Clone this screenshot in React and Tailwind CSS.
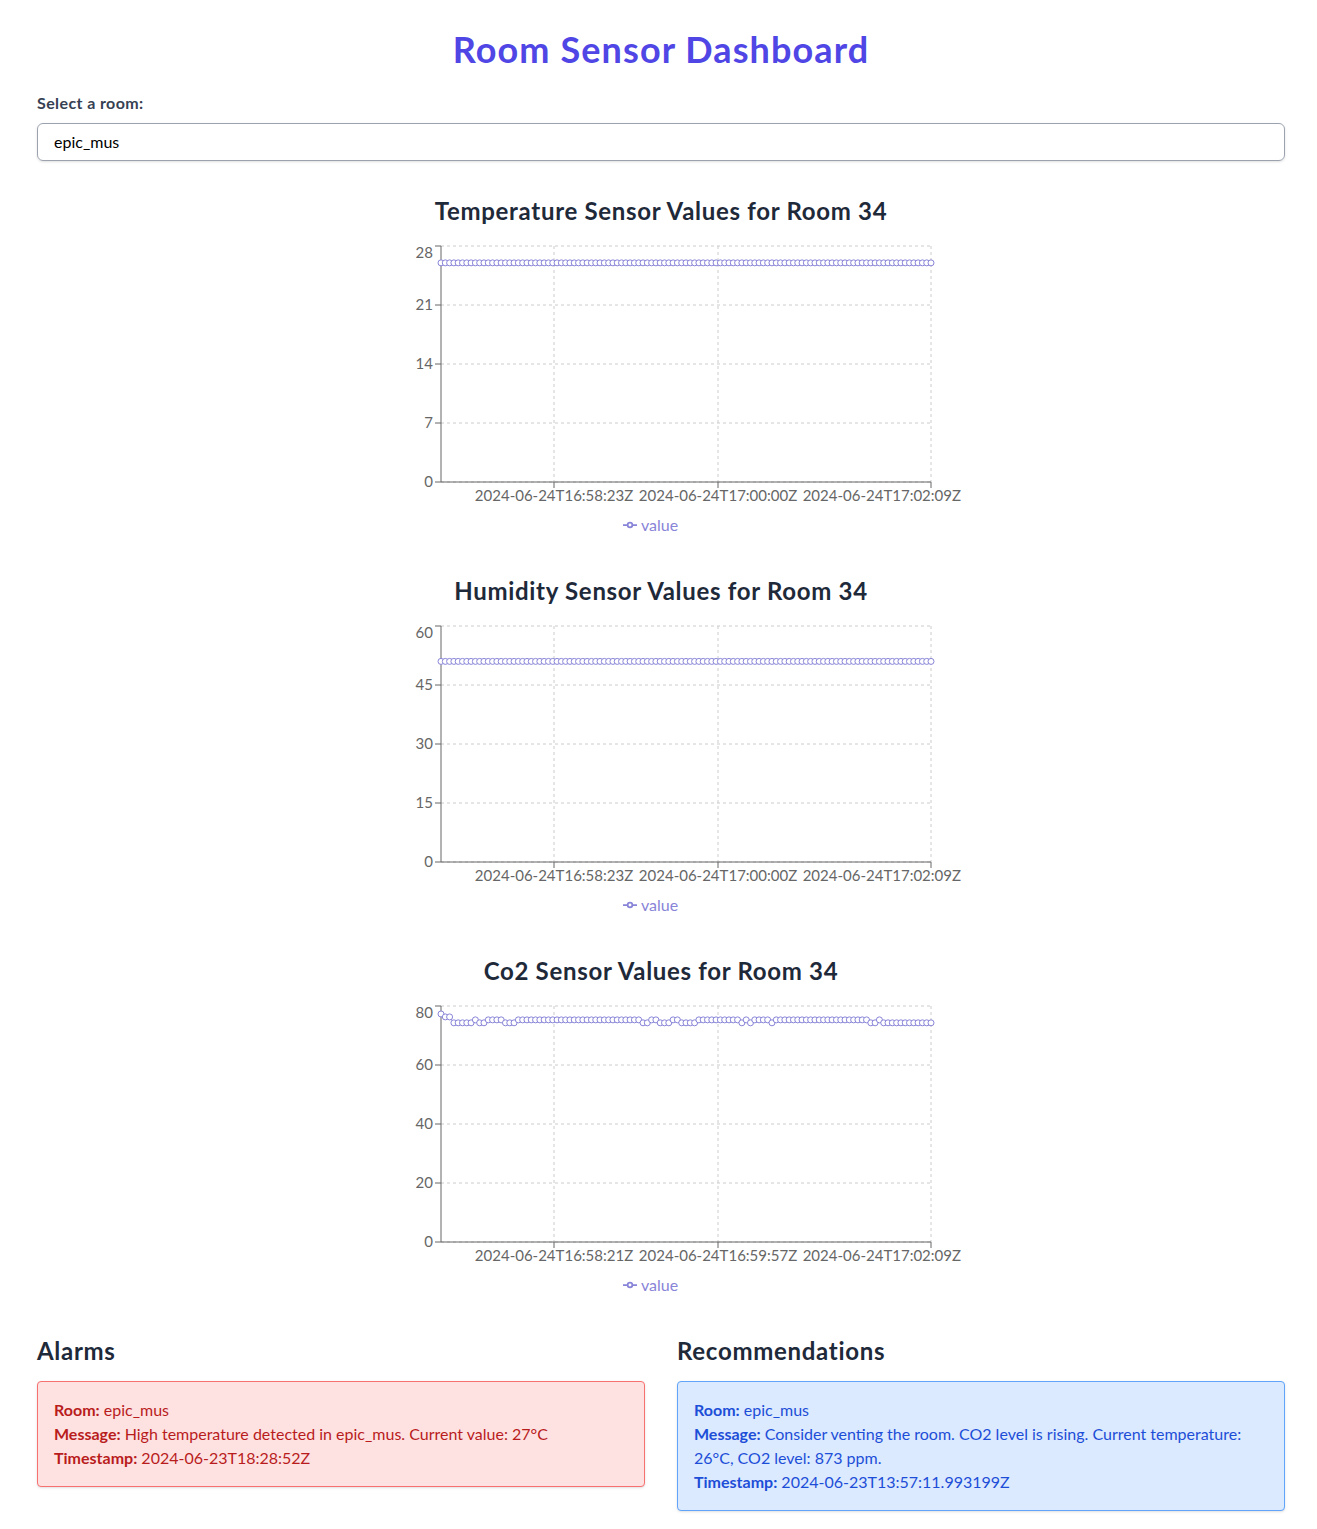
import React from "react";

const N = 115;
const X0 = 80;
const X1 = 570;
const Y0 = 5;
const Y1 = 241;
const COLOR = "#8884d8";

function co2Value(i) {
  const x = 441 + (i * (X1 - X0)) / (N - 1);
  if (i === 0) return 77.3;
  if (x > 444 && x < 452) return 76.3;
  const lows = [
    [453, 473], [479, 487], [504, 517], [553, 557], [640, 649], [656, 670],
    [681, 695], [739, 742], [750, 754], [770, 774], [868, 877], [883, 935],
  ];
  for (const [a, b] of lows) if (x >= a && x <= b) return 74.3;
  return 75.3;
}

const temperature = Array.from({ length: N }, () => 26);
const humidity = Array.from({ length: N }, () => 51);
const co2 = Array.from({ length: N }, (_, i) => co2Value(i));

function Chart({ data, max, yTicks, xLabels }) {
  const px = (i) => X0 + (i * (X1 - X0)) / (data.length - 1);
  const py = (v) => Y1 - (v / max) * (Y1 - Y0);
  const xTickPos = [193, 357, 570];
  const pathD = data.map((v, i) => `${i === 0 ? "M" : "L"}${px(i).toFixed(2)},${py(v).toFixed(2)}`).join(" ");
  return (
    <svg width="600" height="300" viewBox="0 0 600 300" className="mx-auto block overflow-visible">
      <g stroke="#ccc" strokeDasharray="3 3" fill="none">
        {yTicks.map((t) => (
          <line key={"h" + t} x1={X0} x2={X1} y1={py(t)} y2={py(t)} />
        ))}
        {xTickPos.map((x) => (
          <line key={"v" + x} x1={x} x2={x} y1={Y0} y2={Y1} />
        ))}
      </g>
      <line x1={X0} x2={X1} y1={Y1} y2={Y1} stroke="#666" />
      {xTickPos.map((x, k) => (
        <g key={"xt" + x}>
          <line x1={x} x2={x} y1={Y1} y2={Y1 + 6} stroke="#666" />
          <text
            x={k === 2 ? 600 : x}
            y={Y1 + 8}
            dy="0.71em"
            textAnchor={k === 2 ? "end" : "middle"}
            fill="#666"
            fontSize="15"
          >
            {xLabels[k]}
          </text>
        </g>
      ))}
      <line x1={X0} x2={X0} y1={Y0} y2={Y1} stroke="#666" />
      {yTicks.map((t, k) => (
        <g key={"yt" + t}>
          <line x1={X0 - 6} x2={X0} y1={py(t)} y2={py(t)} stroke="#666" />
          <text
            x={X0 - 8}
            y={py(t) + (k === yTicks.length - 1 ? 7 : 0)}
            dy="0.355em"
            textAnchor="end"
            fill="#666"
            fontSize="15"
          >
            {t}
          </text>
        </g>
      ))}
      <path d={pathD} stroke={COLOR} strokeWidth="1" fill="none" />
      {data.map((v, i) => (
        <circle key={i} cx={px(i)} cy={py(v)} r="3" fill="#fff" stroke={COLOR} strokeWidth="1" />
      ))}
      <g transform="translate(262,277)">
        <svg width="14" height="14" viewBox="0 0 32 32" x="0" y="0">
          <path
            strokeWidth="4"
            fill="none"
            stroke={COLOR}
            d="M0,16h10.666666666666666A5.333333333333333,5.333333333333333,0,1,1,21.333333333333332,16H32M21.333333333333332,16A5.333333333333333,5.333333333333333,0,1,1,10.666666666666666,16"
          />
        </svg>
        <text x="18" y="7" dy="0.355em" fill={COLOR} fontSize="16">
          value
        </text>
      </g>
    </svg>
  );
}

function Section({ title, children }) {
  return (
    <div className="mt-[34px]">
      <h2 className="text-2xl font-bold text-center text-gray-800 mb-[14px] tracking-[0.7px]">{title}</h2>
      {children}
    </div>
  );
}

export default function App() {
  return (
    <div
      className="min-h-screen bg-white pl-[37px] pr-[32px] pt-[29px] pb-4 text-gray-800"
      style={{ fontFamily: '"Segoe UI", Lato, "Noto Sans", sans-serif' }}
    >
      <h1 className="text-4xl font-bold text-center text-[#4f46e5] mb-[22px] tracking-[1.1px]">Room Sensor Dashboard</h1>
      <label className="block text-base font-bold text-gray-700 mb-2 tracking-[0.4px]">Select a room:</label>
      <div className="w-full h-[38px] border border-[#9ca3af] rounded-md shadow-sm px-4 flex items-center text-base text-black">
        epic_mus
      </div>

      <Section title="Temperature Sensor Values for Room 34">
        <Chart
          data={temperature}
          max={28}
          yTicks={[0, 7, 14, 21, 28]}
          xLabels={["2024-06-24T16:58:23Z", "2024-06-24T17:00:00Z", "2024-06-24T17:02:09Z"]}
        />
      </Section>
      <Section title="Humidity Sensor Values for Room 34">
        <Chart
          data={humidity}
          max={60}
          yTicks={[0, 15, 30, 45, 60]}
          xLabels={["2024-06-24T16:58:23Z", "2024-06-24T17:00:00Z", "2024-06-24T17:02:09Z"]}
        />
      </Section>
      <Section title="Co2 Sensor Values for Room 34">
        <Chart
          data={co2}
          max={80}
          yTicks={[0, 20, 40, 60, 80]}
          xLabels={["2024-06-24T16:58:21Z", "2024-06-24T16:59:57Z", "2024-06-24T17:02:09Z"]}
        />
      </Section>

      <div className="grid grid-cols-2 gap-8 mt-[34px]">
        <div>
          <h2 className="text-2xl font-bold text-gray-800 mb-[14px] tracking-[0.7px]">Alarms</h2>
          <div className="bg-[#fee2e2] border border-[#f87171] rounded p-4 text-[#b91c1c] text-base leading-6 shadow-sm">
            <p>
              <span className="font-bold">Room:</span> epic_mus
            </p>
            <p>
              <span className="font-bold">Message:</span> High temperature detected in epic_mus. Current value: 27°C
            </p>
            <p>
              <span className="font-bold">Timestamp:</span> 2024-06-23T18:28:52Z
            </p>
          </div>
        </div>
        <div>
          <h2 className="text-2xl font-bold text-gray-800 mb-[14px] tracking-[0.7px]">Recommendations</h2>
          <div className="bg-[#dbeafe] border border-[#60a5fa] rounded p-4 text-[#1d4ed8] text-base leading-6 shadow-sm">
            <p>
              <span className="font-bold">Room:</span> epic_mus
            </p>
            <p>
              <span className="font-bold">Message:</span> Consider venting the room. CO2 level is rising. Current temperature: 26°C, CO2 level: 873 ppm.
            </p>
            <p>
              <span className="font-bold">Timestamp:</span> 2024-06-23T13:57:11.993199Z
            </p>
          </div>
        </div>
      </div>
    </div>
  );
}
